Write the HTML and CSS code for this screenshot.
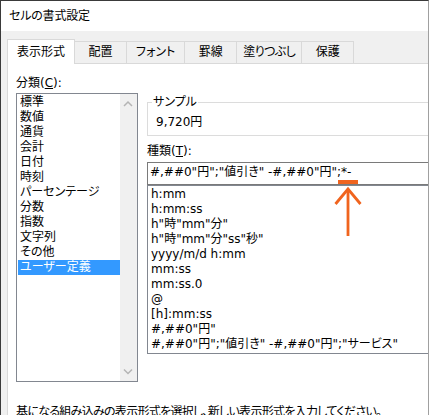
FILE: index.html
```html
<!DOCTYPE html>
<html lang="ja">
<head>
<meta charset="utf-8">
<title>セルの書式設定</title>
<link rel="stylesheet" href="styles.css">
</head>
<body>
<div class="window">
  <div class="titlebar">セルの書式設定</div>
  <div class="dialog">
    <div class="tabs">
      <div class="tab active">表示形式</div>
      <div class="tab">配置</div>
      <div class="tab">フォント</div>
      <div class="tab">罫線</div>
      <div class="tab tab-long">塗りつぶし</div>
      <div class="tab">保護</div>
    </div>
    <div class="page">
      <div class="columns">
        <div class="col-left">
          <div class="label">分類(<u>C</u>):</div>
          <div class="cat-list">
            <ul class="cat-items">
              <li>標準</li>
              <li>数値</li>
              <li>通貨</li>
              <li>会計</li>
              <li>日付</li>
              <li>時刻</li>
              <li>パーセンテージ</li>
              <li>分数</li>
              <li>指数</li>
              <li>文字列</li>
              <li>その他</li>
              <li class="selected">ユーザー定義</li>
            </ul>
            <div class="scrollbar">
              <svg class="arrow" width="17" height="20" viewBox="0 0 17 20"><path d="M4 12 L8 8 L12 12" fill="none" stroke="#b4b4b4" stroke-width="1.5"/></svg>
              <svg class="arrow" width="17" height="20" viewBox="0 0 17 20"><path d="M4 8.5 L8 12.5 L12 8.5" fill="none" stroke="#b4b4b4" stroke-width="1.5"/></svg>
            </div>
          </div>
        </div>
        <div class="col-right">
          <fieldset class="sample">
            <legend>サンプル</legend>
            <div class="sample-value">9,720円</div>
          </fieldset>
          <div class="label type-label">種類(<u>T</u>):</div>
          <div class="format-input">#,##0"円";"値引き" -#,##0"円";*-</div>
          <ul class="format-list">
            <li>h:mm</li>
            <li>h:mm:ss</li>
            <li>h"時"mm"分"</li>
            <li>h"時"mm"分"ss"秒"</li>
            <li>yyyy/m/d h:mm</li>
            <li>mm:ss</li>
            <li>mm:ss.0</li>
            <li>@</li>
            <li>[h]:mm:ss</li>
            <li>#,##0"円"</li>
            <li>#,##0"円";"値引き" -#,##0"円";"サービス"</li>
          </ul>
        </div>
      </div>
      <p class="desc">基になる組み込みの表示形式を選択し、新しい表示形式を入力してください。</p>
    </div>
  </div>
  <svg class="marker" width="36" height="64" viewBox="0 0 36 64">
    <rect x="8" y="4" width="20" height="4" fill="#f0641e"/>
    <polyline points="5.5,28 18,13 30.5,28" fill="none" stroke="#f0641e" stroke-width="2.8"/>
    <line x1="18" y1="14" x2="18" y2="60" stroke="#f0641e" stroke-width="2.8"/>
  </svg>
</div>
</body>
</html>
```

FILE: styles.css
```css
html, body {
  margin: 0;
  padding: 0;
  background: #fff;
}

body {
  font-family: "DejaVu Sans", "Noto Sans CJK JP", sans-serif;
  font-size: 12px;
  color: #000;
  font-feature-settings: "palt";
}

.window {
  position: relative;
  box-sizing: border-box;
  width: 429px;
  height: 415px;
  overflow: hidden;
  border-top: 1px solid #3a3a3a;
  border-left: 1px solid #3a3a3a;
  border-right: 1px solid #a0a0a0;
  background: #fff;
  display: flex;
  flex-direction: column;
}

.titlebar {
  flex: none;
  height: 30px;
  line-height: 30px;
  padding-left: 8px;
  letter-spacing: -0.2px;
}

.dialog {
  flex: 1;
  min-height: 0;
  background: #f0f0f0;
  padding-left: 6px;
  display: flex;
  flex-direction: column;
}

.tabs {
  flex: none;
  height: 32px;
  display: flex;
  align-items: flex-end;
}

.tab {
  box-sizing: border-box;
  height: 22px;
  min-width: 53px;
  padding: 0 9px;
  border: 1px solid #d9d9d9;
  border-bottom: 0;
  line-height: 20px;
  text-align: center;
  margin-left: -1px;
  white-space: nowrap;
}

.tab.tab-long {
  padding: 0 6px;
  letter-spacing: -0.6px;
}

.tab.active {
  margin-left: 0;
  height: 25px;
  padding-top: 2px;
  margin-bottom: -1px;
  background: #fff;
  position: relative;
  z-index: 1;
}

.page {
  flex: 1;
  background: #fff;
  border-top: 1px solid #d9d9d9;
  border-left: 1px solid #d9d9d9;
  padding: 12px 0 0 8px;
}

.columns {
  display: flex;
}

.col-left {
  flex: none;
  width: 122px;
}

.label {
  height: 15px;
  line-height: 15px;
  white-space: nowrap;
}

.cat-list {
  margin-top: 2px;
  box-sizing: border-box;
  height: 289px;
  border: 1px solid #828790;
  display: flex;
}

.cat-items {
  flex: 1;
  list-style: none;
  margin: 0;
  padding: 1px 0 0 1px;
}

.cat-items li {
  height: 15px;
  line-height: 15px;
  padding-left: 2px;
  white-space: nowrap;
}

.cat-items li.selected {
  background: #3399ff;
  color: #fff;
}

.scrollbar {
  flex: none;
  width: 17px;
  background: #f0f0f0;
  display: flex;
  flex-direction: column;
  justify-content: space-between;
}

.arrow {
  display: block;
}

.col-right {
  flex: none;
  width: 300px;
  margin-left: 9px;
  margin-top: 19px;
}

.sample {
  margin: 0;
  padding: 5px 8px 5px 8px;
  border: 1px solid #dcdcdc;
  min-width: 0;
}

.sample legend {
  padding: 0 1px;
  margin-left: -4px;
  line-height: 15px;
}

.sample-value {
  line-height: 15px;
}

.type-label {
  margin-top: 8px;
}

.format-input {
  margin-top: 3px;
  box-sizing: border-box;
  height: 23px;
  border: 1px solid #7a7a7a;
  padding: 2px 0 0 2px;
  line-height: 15px;
  white-space: nowrap;
}

.format-list {
  list-style: none;
  margin: 0;
  padding: 1px 0 1px 3px;
  border: 1px solid #828790;
}

.format-list li {
  height: 15px;
  line-height: 15px;
  white-space: nowrap;
}

.desc {
  margin: 23px 0 0;
  line-height: 15px;
  white-space: nowrap;
  letter-spacing: -0.7px;
}

.marker {
  position: absolute;
  left: 329px;
  top: 175px;
}
```
